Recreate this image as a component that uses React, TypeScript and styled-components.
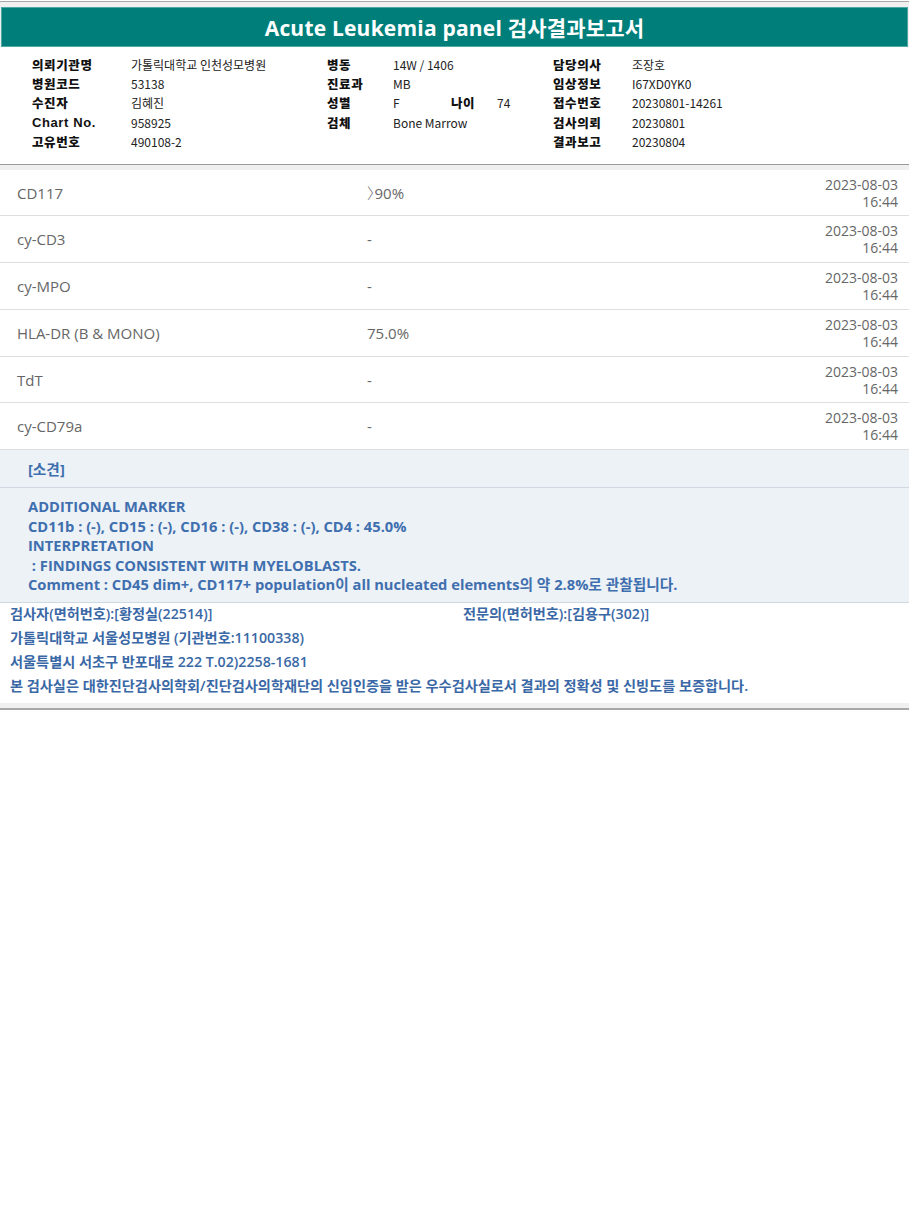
import React from "react";
import styled, { createGlobalStyle } from "styled-components";

const Global = createGlobalStyle`
  html, body { margin: 0; padding: 0; background: #fff; }
  body { font-family: "Open Sans", "Noto Sans CJK KR", sans-serif; }
`;

const Page = styled.div`
  margin-top: 1px;
  border-top: 1px solid #a8a8a8;
  background: #f0f0f0;
  padding: 5px 1px 0;
`;

const TitleBar = styled.div`
  height: 40px;
  background: #007f7a;
  border: 1px solid #4ea8a3;
  color: #fff;
  font-family: "Open Sans", "Noto Sans CJK KR", sans-serif;
  font-weight: 700;
  font-size: 21px;
  letter-spacing: 0.2px;
  display: flex;
  align-items: center;
  justify-content: center;
  box-sizing: border-box;
`;

const InfoSection = styled.div`
  background: #fff;
  margin: 0 -1px;
  height: 118px;
  box-sizing: border-box;
  padding: 8px 0 0 32px;
  border-bottom: 1px solid #9a9a9a;
`;

const InfoGrid = styled.div`
  display: grid;
  grid-template-columns: 99px 196px 66px 58px 46px 56px 79px 1fr;
  grid-template-rows: 19px 19px 19px 20px 18px;
  align-items: center;
  font-size: 12px;
  color: #111;
`;

const Label = styled.div<{ $latin?: boolean }>`
  font-family: ${(p) => (p.$latin ? '"Liberation Sans", Arial' : '"Noto Sans CJK KR"')}, sans-serif;
  font-weight: 900;
  font-size: ${(p) => (p.$latin ? "13px" : "12.5px")};
  letter-spacing: 0.6px;
  white-space: nowrap;
`;

const Value = styled.div`
  font-family: "Noto Sans CJK KR", sans-serif;
  font-size: 12px;
  color: #222;
  white-space: nowrap;
`;

const Strip = styled.div`
  height: 5px;
  background: #f0f0f0;
  margin: 0 -1px;
`;

const ResultList = styled.div`
  background: #fff;
  margin: 0 -1px;
`;

const ResultRow = styled.div<{ $h: number }>`
  display: grid;
  grid-template-columns: 350px 1fr auto;
  align-items: center;
  height: ${(p) => p.$h}px;
  border-bottom: 1px solid #dedede;
  padding: 0 11px 0 17px;
  font-size: 15px;
  color: #666;
`;

const Bracket = styled.span`
  font-family: "Noto Sans CJK KR", sans-serif;
  font-feature-settings: "halt" 1;
  font-weight: 300;
  font-size: 15px;
`;

const DateCell = styled.div`
  text-align: right;
  font-size: 14px;
  line-height: 17px;
  color: #666;
`;

const Opinion = styled.div`
  background: #edf2f7;
  margin: 0 -1px;
  border-bottom: 1px solid #d0d9e2;
  color: #3f6fae;
  font-family: "Open Sans", "Noto Sans CJK KR", sans-serif;
  font-weight: 700;
  font-size: 14.7px;
`;

const OpinionHead = styled.div`
  height: 37px;
  display: flex;
  align-items: center;
  padding-left: 28px;
  border-bottom: 1px solid #d0d9e2;
`;

const OpinionBody = styled.div`
  padding: 9px 0 7px 28px;
  line-height: 19.5px;
  white-space: pre;
`;

const Footer = styled.div`
  background: #fff;
  margin: 0 -1px;
  padding: 0 0 4px 10px;
  color: #3a68a6;
  font-weight: 600;
  font-size: 14.2px;
`;

const FooterLine = styled.div`
  display: flex;
  height: 24px;
  line-height: 22px;
  white-space: nowrap;
`;

const FooterCol = styled.span<{ $w?: number }>`
  width: ${(p) => (p.$w ? `${p.$w}px` : "auto")};
  white-space: nowrap;
`;

const BottomStrip = styled.div`
  height: 5px;
  background: #f0f0f0;
  margin: 0 -1px;
  border-bottom: 2px solid #a8a8a8;
`;

const info: [string, string, boolean?][][] = [
  [["의뢰기관명", "가톨릭대학교 인천성모병원"], ["병동", "14W / 1406"], ["", ""], ["담당의사", "조장호"]],
  [["병원코드", "53138"], ["진료과", "MB"], ["", ""], ["임상정보", "I67XD0YK0"]],
  [["수진자", "김혜진"], ["성별", "F"], ["나이", "74"], ["접수번호", "20230801-14261"]],
  [["Chart No.", "958925", true], ["검체", "Bone Marrow"], ["", ""], ["검사의뢰", "20230801"]],
  [["고유번호", "490108-2"], ["", ""], ["", ""], ["결과보고", "20230804"]],
];

const results: [string, string, number, boolean?][] = [
  ["CD117", "90%", 45, true],
  ["cy-CD3", "-", 46],
  ["cy-MPO", "-", 46],
  ["HLA-DR (B & MONO)", "75.0%", 46],
  ["TdT", "-", 45],
  ["cy-CD79a", "-", 46],
];

const opinion = `ADDITIONAL MARKER
CD11b : (-), CD15 : (-), CD16 : (-), CD38 : (-), CD4 : 45.0%
INTERPRETATION
 : FINDINGS CONSISTENT WITH MYELOBLASTS.
Comment : CD45 dim+, CD117+ population이 all nucleated elements의 약 2.8%로 관찰됩니다.`;

export default function App() {
  return (
    <>
      <Global />
      <Page>
        <TitleBar>Acute Leukemia panel 검사결과보고서</TitleBar>
        <InfoSection>
          <InfoGrid>
            {info.map((row, i) =>
              row.map(([l, v, latin], j) => (
                <React.Fragment key={`${i}-${j}`}>
                  <Label $latin={latin}>{l}</Label>
                  <Value>{v}</Value>
                </React.Fragment>
              ))
            )}
          </InfoGrid>
        </InfoSection>
        <Strip />
        <ResultList>
          {results.map(([name, val, h, gt]) => (
            <ResultRow key={name} $h={h}>
              <div>{name}</div>
              <div>
                {gt && <Bracket>〉</Bracket>}
                {val}
              </div>
              <DateCell>
                2023-08-03
                <br />
                16:44
              </DateCell>
            </ResultRow>
          ))}
        </ResultList>
        <Opinion>
          <OpinionHead>[소견]</OpinionHead>
          <OpinionBody>{opinion}</OpinionBody>
        </Opinion>
        <Footer>
          <FooterLine>
            <FooterCol $w={453}>검사자(면허번호):[황정실(22514)]</FooterCol>
            <FooterCol>전문의(면허번호):[김용구(302)]</FooterCol>
          </FooterLine>
          <FooterLine>가톨릭대학교 서울성모병원 (기관번호:11100338)</FooterLine>
          <FooterLine>서울특별시 서초구 반포대로 222 T.02)2258-1681</FooterLine>
          <FooterLine>본 검사실은 대한진단검사의학회/진단검사의학재단의 신임인증을 받은 우수검사실로서 결과의 정확성 및 신빙도를 보증합니다.</FooterLine>
        </Footer>
        <BottomStrip />
      </Page>
    </>
  );
}
